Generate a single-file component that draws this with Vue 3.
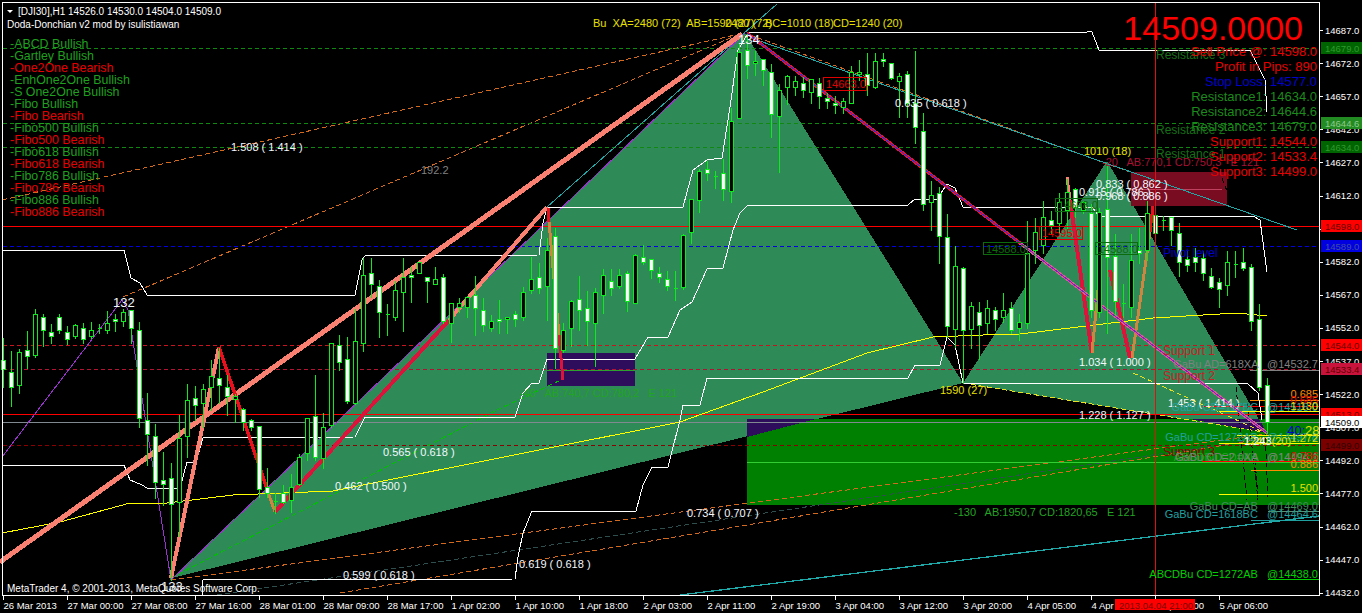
<script setup>
// bars read off the chart: [high, bodyTop, bodyBottom, low, white]
const groups = [
  { y0: 230, start: 0, rows: [
    [320,390,418,472,1],[360,427,472,528,1],[355,367,466,488,0],[300,361,379,415,1],[235,253,374,380,0],
    [250,262,301,348,1],[280,307,319,340,1],[250,262,301,310,1],[285,307,328,342,1],[280,286,319,325,0],
    [275,295,328,340,1],[272,301,319,325,0],[280,295,295,310,0],[240,280,301,310,0],[250,268,274,303,1],
    [235,247,274,288,0],[240,241,295,340,1],[273,301,565,590,1],[487,571,613,705,1],[580,619,757,805,1],
    [663,751,763,825,1],[697,745,823,1050,1],[552,625,817,917,0],[460,511,619,680,0],[465,505,526,570,1],
    [460,478,520,590,0],[388,439,472,540,0],[350,445,466,520,1],[433,472,499,555,1],[490,499,507,577,0],
    [532,538,577,600,1],[565,571,592,600,1],[587,587,778,800,1],[712,770,790,800,1],[785,812,812,850,0],
    [763,790,817,820,1],[730,770,811,845,0],[670,680,763,765,0],[560,565,670,690,0],[432,559,680,690,1],
    [545,592,685,715,0],[335,340,586,590,0],[312,346,395,420,1]
  ] },
  { y0: 180, start: 43, rows: [
    [468,538,662,670,1],[385,484,670,672,0],[230,286,490,512,0],[230,280,313,352,1],[297,319,397,470,1],
    [370,403,403,465,0],[300,331,412,420,0],[230,292,337,452,0],[258,286,292,365,1],[245,247,280,280,0],
    [292,292,304,365,1],[258,298,313,313,0],[280,292,424,430,1],[365,370,430,485,0],[352,370,382,395,0],
    [345,352,380,412,0],[285,346,385,465,1],[350,391,436,452,1],[403,424,445,452,0],[358,418,424,458,1],
    [412,412,418,458,0],[390,403,418,438,1],[318,337,412,420,0],[228,298,331,338,0],[247,292,325,340,1],
    [170,211,319,420,0],[142,167,505,565,1],[425,451,511,515,0],[358,364,445,497,0],[285,358,391,450,1],
    [330,385,424,495,1],[320,337,430,557,0],[265,286,346,400,0],[265,304,325,345,1],[265,286,319,325,0],
    [270,280,364,392,1],[220,226,370,370,0],[192,232,247,252,1],[235,238,271,293,1],[258,280,292,305,1],
    [270,298,319,330,1],[270,325,325,360,0]
  ] },
  { y0: 0, start: 85, rows: [
    [700,705,860,866,0],[595,597,696,730,0],[505,514,600,635,0],[480,508,520,540,1],[510,527,527,565,0],
    [475,520,568,600,1],[320,362,574,607,0],[130,156,355,355,0],[100,151,196,235,1],[150,184,190,225,0],
    [175,178,211,255,1],[190,217,343,410,1],[250,271,349,515,0],[222,229,262,312,0],[225,244,262,285,0],
    [228,250,271,290,1],[235,238,277,310,0],[230,250,289,325,1],[275,295,304,325,1],[285,310,316,340,1],
    [290,304,322,340,0],[195,217,310,310,0],[178,217,223,240,0],[155,223,256,285,1],[155,184,262,265,0],
    [155,178,184,197,1],[190,190,235,238,1],[215,229,244,350,0],[210,223,310,350,1],[150,310,382,430,1],
    [337,394,613,630,1],[540,586,607,690,0],[557,580,707,788,1],[640,712,977,1010,1],[735,798,986,1040,0],
    [798,805,991,1148,1],[903,919,986,1045,0],[903,937,976,1078,1],[898,925,970,1000,0],[918,931,958,990,1],
    [876,931,952,965,0],[903,925,991,1000,1],[940,965,985,1020,0]
  ] },
  { y0: 0, start: 128, rows: [
    [660,760,970,985,0],[650,695,750,790,0],[600,652,735,760,0],[630,660,675,700,1],[575,607,668,700,0],
    [535,575,630,690,0],[560,568,620,650,1],[600,605,630,640,0],[610,640,930,950,1],[620,635,937,950,0],
    [490,628,770,1000,1],[700,768,903,945,1],[850,910,910,950,0],[700,780,920,950,0],[680,750,760,790,1],
    [600,640,750,780,0],[620,645,700,740,1],[645,660,660,690,0],[650,652,690,735,1],[665,700,787,828,1],
    [750,778,795,812,1],[740,772,787,812,1],[750,775,820,840,1],[800,827,860,865,1],[830,845,867,920,1],
    [750,787,855,885,0],[750,793,793,830,0],[740,787,805,810,1],[790,800,963,990,1],[910,958,1160,1170,1],
    [1130,1156,1267,1300,1]
  ] }
]

const snap = v => Math.round(v) + 0.5
const candles = []
groups.forEach(g => {
  g.rows.forEach((r, n) => {
    const i = g.start + n
    const cx = 3.5 + 8 * i
    const t = snap(g.y0 + r[1] / 3)
    const b = snap(g.y0 + r[2] / 3)
    candles.push({
      i,
      wick: `M${cx} ${snap(g.y0 + r[0] / 3)}V${snap(g.y0 + r[3] / 3)}`,
      body: `M${cx - 2} ${t}H${cx + 2}V${b}H${cx - 2}Z`,
      fill: r[4] ? '#fff' : '#000'
    })
  })
})

const whiteLines = [
  '2,250 124,250 131,278 140,283 147,295 355,295 362,260 365,256 539,255 543,223 547,207 683,207 693,170 707,160 722,158 730,107 738,50 748,33 1092,32 1099,50 1250,50 1265,80 1267,112',
  '2,465 124,465 130,480 142,485 147,488 180,488 187,462 196,462 203,438 355,437 365,417 515,417 523,393 532,383 539,383 547,359 635,359 648,337 668,337 680,310 692,302 707,269 723,268 733,230 740,213 748,205 908,205 915,199 937,199 947,184 955,188 963,207 1092,207 1099,216 1253,216 1260,220 1267,272',
  '202,595 203,580 515,579 518,557 523,533 532,511 636,511 643,485 652,467 668,467 680,420 683,405 700,405 707,378 908,378 915,365 940,365 947,337 955,345 963,383 1247,383 1258,393 1262,420'
]

const levels = [
  { y: 48.5, x1: 3, c: '#118811', d: '4 3' },
  { y: 123.5, x1: 3, c: '#118811', d: '4 3' },
  { y: 147.5, x1: 3, c: '#118811', d: '4 3' },
  { y: 226.5, x1: 3, c: '#f00', d: '' },
  { y: 246.5, x1: 3, c: '#0000e0', d: '4 3' },
  { y: 345.5, x1: 3, c: '#c8141e', d: '4 3' },
  { y: 369.5, x1: 3, c: '#b01432', d: '4 3' },
  { y: 414.5, x1: 3, c: '#f00', d: '' },
  { y: 422.5, x1: 3, c: '#808890', d: '' },
  { y: 445.5, x1: 3, c: '#8b0000', d: '4 3' },
  { y: 462.5, x1: 747, c: '#32cd32', d: '' }
]

const fibLines = [
  { x: 1250, y: 370.5, c: '#808080' },
  { x: 1250, y: 400.5, c: '#ff8c00' },
  { x: 1203, y: 406.5, c: '#f00' },
  { x: 1219, y: 411.5, c: '#ff0' },
  { x: 1237, y: 435.5, c: '#ff0' },
  { x: 1219, y: 443.5, c: '#ff0' },
  { x: 1202, y: 461.5, c: '#f00' },
  { x: 1251, y: 470.5, c: '#ff8c00' },
  { x: 1219, y: 494.5, c: '#ff0' },
  { x: 1268, y: 511.5, c: '#5f8f6f' },
  { x: 1251, y: 520.5, c: '#20a0a0' },
  { x: 1268, y: 579.5, c: '#00d000' }
]

const legend = [
  ['-ABCD Bullish', 1], ['-Gartley Bullish', 1], ['-One2One Bearish', 0], ['-EnhOne2One Bullish', 1],
  ['-S One2One Bullish', 1], ['-Fibo Bullish', 1], ['-Fibo Bearish', 0], ['-Fibo500 Bullish', 1],
  ['-Fibo500 Bearish', 0], ['-Fibo618 Bullish', 1], ['-Fibo618 Bearish', 0], ['-Fibo786 Bullish', 1],
  ['-Fibo786 Bearish', 0], ['-Fibo886 Bullish', 1], ['-Fibo886 Bearish', 0]
]

const info = [
  ['Sell Price @: 14598.0', 'red'], ['Profit in Pips: 890', 'red'], ['Stop Loss: 14577.0', 'blue'],
  ['Resistance1: 14634.0', 'green'], ['Resistance2: 14644.6', 'green'], ['Resistance3: 14679.0', 'green'],
  ['Support1: 14544.0', 'red'], ['Support2: 14533.4', 'red'], ['Support3: 14499.0', 'red']
]

// text lying on the chart: x, y (middle of the line), text, class
const labels = [
  [593, 23, 'Bu  XA=2480 (72)  AB=1590 (27)', 'lb yellow'],
  [725, 23, '2480 (72)', 'lb yellow'],
  [765, 23, 'BC=1010 (18)', 'lb yellow'],
  [833, 23, 'CD=1240 (20)', 'lb yellow'],
  [231, 147, '1.508 ( 1.414 )', 'lb white'],
  [895, 103, '0.635 ( 0.618 )', 'lb white'],
  [421, 170, '192.2', 'lb gray'],
  [113, 302, '132', 'lb big white'],
  [161, 586, '133', 'lb big white'],
  [738, 39, '134', 'lb big white'],
  [383, 452, '0.565 ( 0.618 )', 'lb white'],
  [335, 486, '0.462 ( 0.500 )', 'lb white'],
  [343, 575, '0.599 ( 0.618 )', 'lb white'],
  [519, 564, '0.619 ( 0.618 )', 'lb white'],
  [687, 513, '0.734 ( 0.707 )', 'lb white'],
  [940, 390, '1590 (27)', 'lb yellow'],
  [954, 512, '-130   AB:1950,7 CD:1820,65   E 121', 'lb mid'],
  [520, 393, '-40   AB:740,7 CD:780,2   E 121', 'lb mid'],
  [1079, 362, '1.034 ( 1.000 )', 'lb white'],
  [1079, 415, '1.228 ( 1.127 )', 'lb white'],
  [1168, 403, '1.453 ( 1.414 )', 'lb white'],
  [1084, 151, '1010 (18)', 'lb yellow'],
  [1102, 162, '-20   AB:770,1 CD:750,3   E 121', 'lb crim'],
  [1096, 184, '0.833 ( 0.862 )', 'lb white'],
  [1079, 192, '0.915 ( 0.786 )', 'lb white'],
  [1096, 196, '0.968 ( 0.886 )', 'lb white'],
  [1163, 253, 'Pivot level', 'lb name navy'],
  [1163, 351, 'Support 1', 'lb name firebrick'],
  [1163, 376, 'Support 2', 'lb name firebrick'],
  [1163, 452, 'Support 3', 'lb name maroon'],
  [1156, 55, 'Resistance 3', 'lb name forest'],
  [1156, 130, 'Resistance 2', 'lb name forest'],
  [1156, 154, 'Resistance 1', 'lb name forest']
]

// right-aligned harmonic labels at the price axis
const endLabels = [
  [364, 'GaBu AD=618XA   @14532.7', 'gray'],
  [394, '0.685', 'orange'],
  [400, '0.685', 'red'],
  [407, 'GaBu CD=117BC   @14518.0', 'teal'],
  [406, '1.130', 'yellow'],
  [437, 'GaBu CD=1272AB   @14497.8', 'teal'],
  [438, '1.272', 'yellow'],
  [457, 'ABCDBu CD=AB   @14494.0', 'mid'],
  [457, 'GaBu CD=2.0XA   @14494.1', 'gray'],
  [456, '0.786', 'red'],
  [464, '0.886', 'orange'],
  [488, '1.500', 'yellow'],
  [506, 'GaBu CD=AB   @14469.0', 'seagreen'],
  [514, 'GaBu CD=1618BC   @14464.6', 'teal'],
  [574, 'ABCDBu CD=1272AB   @14438.0', 'lime']
]

const boxes = [
  { x: 823, y: 77, w: 43, h: 13, t: '14663.0', c: 'boxred' },
  { x: 983, y: 242, w: 44, h: 12, t: '14588.0', c: 'boxgreen' },
  { x: 1039, y: 226, w: 43, h: 13, t: '14595.0', c: 'boxred' },
  { x: 1055, y: 198, w: 42, h: 13, t: '14608.0', c: 'boxgreen' },
  { x: 1095, y: 242, w: 42, h: 12, t: '14588.0', c: 'boxgreen' }
]

const axisPrices = [
  14687, 14672, 14657, 14642, 14627, 14612, 14597, 14582, 14567, 14552,
  14537, 14522, 14507, 14492, 14477, 14462, 14447, 14432
].map((p, n) => ({ y: 30 + n * 33.1, t: p.toFixed(1) }))

const tags = [
  { y: 48, t: '14679.0', bg: '#006400', fg: '#2f9a2f' },
  { y: 123, t: '14644.6', bg: '#228b22', fg: '#8fc88f' },
  { y: 147, t: '14634.0', bg: '#006400', fg: '#2f9a2f' },
  { y: 226, t: '14598.0', bg: '#f00', fg: '#600' },
  { y: 246, t: '14589.0', bg: '#0000e0', fg: '#4050a0' },
  { y: 345, t: '14544.0', bg: '#f00', fg: '#600' },
  { y: 369, t: '14533.4', bg: '#c8143c', fg: '#600' },
  { y: 414, t: '14513.0', bg: '#f00', fg: '#600' },
  { y: 422, t: '14509.0', bg: '#fff', fg: '#000' },
  { y: 445, t: '14499.0', bg: '#7a0000', fg: '#300' }
]

const timeLabels = [
  '26 Mar 2013', '27 Mar 00:00', '27 Mar 08:00', '27 Mar 16:00', '28 Mar 01:00', '28 Mar 09:00', '28 Mar 17:00',
  '1 Apr 02:00', '1 Apr 10:00', '1 Apr 18:00', '2 Apr 03:00', '2 Apr 11:00', '2 Apr 19:00', '3 Apr 04:00',
  '3 Apr 12:00', '3 Apr 20:00', '4 Apr 05:00', '4 Apr 13:00', '4 Apr 21:00', '5 Apr 06:00'
].map((t, k) => ({ x: 3.5 + 64 * k, t }))
</script>

<template>
  <svg class="chart" width="1362" height="613" viewBox="0 0 1362 613">
    <g class="crisp">
      <polygon points="172,578 745,33 963,383" fill="#2e8b57" />
      <polygon points="963,383 1107,161 1267,433" fill="#2e8b57" />
      <rect x="747" y="419" width="572" height="86" fill="#008000" />
      <polygon points="747,419 816,419 747,437" fill="#2e0e5c" />
      <polygon points="1190,419 1259,419 1267,433" fill="#2e0e5c" />
      <rect x="547" y="353" width="88" height="33" fill="#2e0e5c" />
      <rect x="1131" y="172" width="96" height="34" fill="#7a0c22" />
      <line x1="547" y1="370.5" x2="635" y2="370.5" stroke="#2ea02e" />
      <line x1="1131" y1="189.5" x2="1222" y2="189.5" stroke="#c04060" />

      <!-- dashed trend lines -->
      <g fill="none" stroke-dasharray="5 3">
        <line x1="2" y1="200" x2="735" y2="35" stroke="#d2691e" />
        <line x1="123" y1="297" x2="742" y2="33" stroke="#d2691e" />
        <line x1="750" y1="35" x2="1130" y2="172" stroke="#d2691e" />
        <line x1="171" y1="580" x2="1267" y2="434" stroke="#d2691e" />
        <line x1="217" y1="595" x2="1267" y2="438" stroke="#2f4f4f" />
        <line x1="340" y1="593" x2="1267" y2="438" stroke="#d2691e" />
        <line x1="171" y1="578" x2="497" y2="410" stroke="#00c000" />
        <line x1="497" y1="410" x2="563" y2="379" stroke="#00c000" />
        <line x1="963" y1="383" x2="1263" y2="432" stroke="#e8e020" />
        <line x1="1133" y1="373" x2="1263" y2="432" stroke="#e8e020" />
        <line x1="1236" y1="387" x2="1247" y2="500" stroke="#000" />
        <line x1="1247" y1="403" x2="1258" y2="500" stroke="#000" />
        <line x1="1255" y1="460" x2="1258" y2="497" stroke="#000" />
        <line x1="1265" y1="430" x2="1268" y2="497" stroke="#000" />
        <line x1="1222" y1="178" x2="1227" y2="191" stroke="#000" />
      </g>

      <!-- horizontal levels -->
      <line
        v-for="l in levels"
        :key="l.y"
        :x1="l.x1"
        :x2="1319"
        :y1="l.y"
        :y2="l.y"
        :stroke="l.c"
        :stroke-dasharray="l.d"
      />
      <line
        v-for="l in fibLines"
        :key="l.y"
        :x1="l.x"
        x2="1319"
        :y1="l.y"
        :y2="l.y"
        :stroke="l.c"
      />

      <!-- thin pattern lines -->
      <polyline points="2,457 122,300 128,310 171,580 745,33" fill="none" stroke="#9932cc" />
      <line x1="547" y1="207" x2="777" y2="4" stroke="#20a8a8" />
      <polyline points="757,40 1020,133 1297,230" fill="none" stroke="#20a8a8" />
      <line x1="680" y1="595" x2="1319" y2="516" stroke="#20a8a8" stroke-width="1.3" />
      <polyline points="2,533 60,522 130,503 167,503 233,495 333,491 680,422 763,392 867,353 933,337 983,335 1020,334 1153,318 1237,313 1267,316" fill="none" stroke="#ff0" />
      <polyline
        v-for="(pts, n) in whiteLines"
        :key="n"
        :points="pts"
        fill="none"
        stroke="#fff"
      />

      <!-- thick harmonic legs -->
      <g fill="none">
        <line x1="0" y1="562" x2="742" y2="34" stroke="#fa8072" stroke-width="5" />
        <line x1="171" y1="578" x2="219" y2="347" stroke="#fa8072" stroke-width="4" />
        <line x1="219" y1="347" x2="268" y2="492" stroke="#e8101c" stroke-width="3.5" />
        <line x1="268" y1="492" x2="275" y2="512" stroke="#cd853f" stroke-width="3" />
        <line x1="275" y1="512" x2="449" y2="320" stroke="#dc143c" stroke-width="4" />
        <line x1="449" y1="320" x2="547" y2="207" stroke="#fa8072" stroke-width="4" />
        <line x1="548" y1="208" x2="549" y2="222" stroke="#e8101c" stroke-width="3" />
        <line x1="549" y1="222" x2="559" y2="335" stroke="#cd853f" stroke-width="3" />
        <line x1="559" y1="335" x2="563" y2="380" stroke="#dc143c" stroke-width="3" />
        <line x1="1067" y1="177" x2="1070" y2="200" stroke="#fa8072" stroke-width="3" />
        <line x1="1070" y1="200" x2="1092" y2="353" stroke="#dc143c" stroke-width="4" />
        <line x1="1092" y1="353" x2="1098" y2="290" stroke="#cd853f" stroke-width="3" />
        <line x1="1110" y1="270" x2="1130" y2="358" stroke="#dc143c" stroke-width="4" />
        <line x1="1132" y1="358" x2="1150" y2="232" stroke="#cd853f" stroke-width="3" />
        <line x1="1150" y1="232" x2="1153" y2="206" stroke="#e8101c" stroke-width="3" />
        <line x1="747" y1="33" x2="1020" y2="243" stroke="#f0102a" stroke-width="3" />
        <line x1="747" y1="33" x2="1020" y2="243" stroke="#3030d0" stroke-width="1" />
        <line x1="1020" y1="243" x2="1267" y2="433" stroke="#d85a90" stroke-width="3" />
        <line x1="1020" y1="243" x2="1267" y2="433" stroke="#8020c0" stroke-width="1" />
      </g>

      <!-- bars -->
      <g v-for="c in candles" :key="c.i">
        <path :d="c.wick" stroke="#0cec1c" fill="none" />
        <path :d="c.body" stroke="#0cec1c" :fill="c.fill" />
      </g>

      <line x1="1155.5" y1="3" x2="1155.5" y2="595" stroke="#e01010" />

      <!-- frame and ticks -->
      <path d="M2.5 596V2.5H1319.5V595.5H2" fill="none" stroke="#fff" />
      <line
        v-for="p in axisPrices"
        :key="p.t"
        x1="1320"
        x2="1323"
        :y1="Math.round(p.y) + 0.5"
        :y2="Math.round(p.y) + 0.5"
        stroke="#fff"
      />
      <line
        v-for="l in timeLabels"
        :key="l.t"
        :x1="l.x"
        :x2="l.x"
        y1="596"
        y2="600"
        stroke="#fff"
      />
    </g>

    <!-- header -->
    <polygon points="7,10 13,10 10,13" fill="#fff" />
    <text class="sys" x="18" y="11">[DJI30],H1  14526.0 14530.0 14504.0 14509.0</text>
    <text class="sys" x="7" y="24">Doda-Donchian v2 mod by isulistiawan</text>
    <text class="sys" x="7" y="588">MetaTrader 4, © 2001-2013, MetaQuotes Software Corp.</text>

    <!-- pattern list -->
    <text
      v-for="(l, n) in legend"
      :key="l[0]"
      class="legend"
      :class="l[1] ? 'bull' : 'bear'"
      x="10"
      :y="44 + n * 12"
    >{{ l[0] }}</text>

    <!-- labels lying on the chart -->
    <text
      v-for="l in labels"
      :key="l[0] + '-' + l[1]"
      :class="l[3]"
      :x="l[0]"
      :y="l[1]"
    >{{ l[2] }}</text>
    <text
      v-for="l in endLabels"
      :key="l[1]"
      class="lb end"
      :class="l[2]"
      x="1318"
      :y="l[0]"
    >{{ l[1] }}</text>
    <text class="lb yellow" x="1244" y="441">1240 (20)</text>
    <text class="lb white" x="1244" y="441">1.243</text>
    <text class="count" x="1287" y="430"><tspan class="blue">40:</tspan><tspan class="yellow">28</tspan></text>

    <g v-for="b in boxes" :key="b.x">
      <rect
        :x="b.x + 0.5"
        :y="b.y + 0.5"
        :width="b.w"
        :height="b.h"
        fill="none"
        class="crisp"
        :class="b.c"
      />
      <text class="lb box" :class="b.c + 't'" :x="b.x + 3" :y="b.y + 7">{{ b.t }}</text>
    </g>

    <!-- account block -->
    <text class="quote" x="1303" y="40">14509.0000</text>
    <text
      v-for="(l, n) in info"
      :key="l[0]"
      class="info"
      :class="l[1]"
      x="1317"
      :y="51.5 + n * 14.95"
    >{{ l[0] }}</text>

    <!-- price axis -->
    <text
      v-for="p in axisPrices"
      :key="p.t"
      class="axis"
      x="1325"
      :y="p.y"
    >{{ p.t }}</text>
    <g v-for="t in tags" :key="t.t">
      <rect class="crisp" x="1321" :y="t.y - 6" width="41" height="12" :fill="t.bg" />
      <text class="tagtext" x="1325" :y="t.y" :fill="t.fg">{{ t.t }}</text>
    </g>

    <!-- time axis -->
    <text
      v-for="l in timeLabels"
      :key="l.t"
      class="axis"
      :x="l.x"
      y="605"
    >{{ l.t }}</text>
    <rect class="crisp" x="1115" y="599" width="80" height="11" fill="#f00" />
    <text class="axis stamp" x="1119" y="605">2013.04.04 21:00</text>
  </svg>
</template>

<style>
html,
body {
  background: #000;
}
</style>

<style scoped>
.chart {
  display: block;
  background: #000;
  font-family: "Liberation Sans", Arial, sans-serif;
}

.crisp {
  shape-rendering: crispEdges;
}

text {
  white-space: pre;
  dominant-baseline: central;
}

.sys {
  font-size: 10px;
  fill: #fff;
}

.axis {
  font-size: 9.5px;
  fill: #fff;
}

.tagtext {
  font-size: 9.5px;
}

.stamp {
  fill: #7a0000;
}

.legend {
  font-size: 12.4px;
}

.bull {
  fill: #1fa01f;
}

.bear {
  fill: #e80000;
}

.lb {
  font-size: 11px;
}

.big {
  font-size: 13px;
}

.name {
  font-size: 12px;
}

.end {
  text-anchor: end;
}

.count {
  font-size: 13px;
}

.quote {
  font-size: 34px;
  fill: #f00;
  text-anchor: end;
  dominant-baseline: auto;
}

.info {
  font-size: 13px;
  text-anchor: end;
}

.white { fill: #f4f8ff; }
.yellow { fill: #e8e000; }
.gray { fill: #808080; }
.red { fill: #e80000; }
.blue { fill: #0000d0; }
.green { fill: #1c8a1c; }
.mid { fill: #22a522; }
.crim { fill: #a81034; }
.orange { fill: #ff8c00; }
.teal { fill: #20a0a0; }
.seagreen { fill: #3f8f5f; }
.lime { fill: #00d000; }
.navy { fill: #0000c8; }
.firebrick { fill: #c81e28; }
.maroon { fill: #8b0000; }
.forest { fill: #167016; }

.boxred { stroke: #e00000; }
.boxgreen { stroke: #0c6b0c; }
.boxredt { fill: #e00000; }
.boxgreent { fill: #0c6b0c; }
</style>
